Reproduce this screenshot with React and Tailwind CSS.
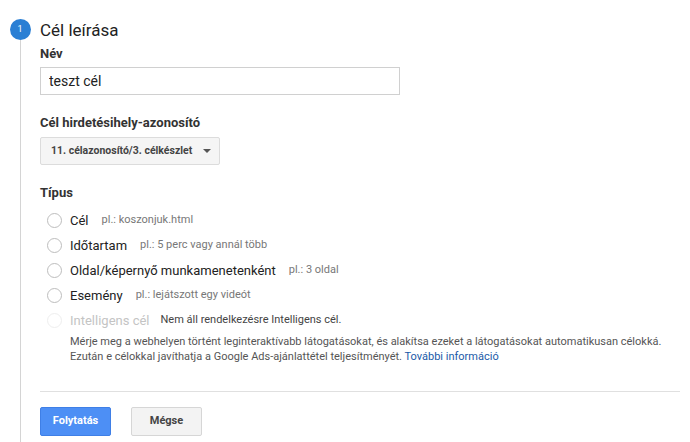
import React, { useState } from 'react';

const types = [
  { label: 'Cél', hint: 'pl.: koszonjuk.html' },
  { label: 'Időtartam', hint: 'pl.: 5 perc vagy annál több' },
  { label: 'Oldal/képernyő munkamenetenként', hint: 'pl.: 3 oldal' },
  { label: 'Esemény', hint: 'pl.: lejátszott egy videót' },
];

export default function App() {
  const [name, setName] = useState('teszt cél');
  const [type, setType] = useState(null);

  return (
    <div className="flex w-[690px] h-[442px] bg-white overflow-hidden text-[#222]" style={{ fontFamily: 'Roboto, "Liberation Sans", Arial, sans-serif' }}>
      {/* step rail */}
      <div className="flex flex-col items-center w-[40px] pt-[19px] shrink-0">
        <div className="w-[21px] h-[21px] rounded-full bg-[#2a7fd4] text-white text-[9px] flex items-center justify-center">1</div>
        <div className="flex-1 w-px bg-[#d4d4d4]" />
      </div>

      <div className="flex-1 pt-[18px] pr-[10px]">
        <h2 className="text-[17px] leading-[24px] text-[#222]">Cél leírása</h2>

        <label className="block mt-[4px] text-[13px] leading-[16px] font-bold text-[#333]">Név</label>
        <input
          value={name}
          onChange={(e) => setName(e.target.value)}
          className="mt-[5px] w-[360px] h-[28px] border border-[#d0d0d0] px-[8px] text-[14px] text-[#222] outline-none"
        />

        <label className="block mt-[20px] text-[13px] leading-[16px] font-bold text-[#333]">Cél hirdetésihely-azonosító</label>
        <button className="mt-[6px] w-[180px] h-[28px] flex items-center justify-between bg-[#f5f5f5] border border-[#dcdcdc] rounded-[2px] pl-[10px] pr-[8px] text-[10.5px] font-bold text-[#444]">
          <span>11. célazonosító/3. célkészlet</span>
          <span className="w-0 h-0 border-l-[4px] border-r-[4px] border-t-[4px] border-l-transparent border-r-transparent border-t-[#555]" />
        </button>

        <label className="block mt-[20px] text-[13px] leading-[16px] font-bold text-[#333]">Típus</label>
        <div className="mt-[7px] pl-[7px]">
          {types.map((t, i) => (
            <div key={t.label} className="flex items-center h-[25px] cursor-pointer" onClick={() => setType(i)}>
              <span className={`w-[15px] h-[15px] rounded-full border ${type === i ? 'border-[#2a7fd4]' : 'border-[#bdbdbd]'} flex items-center justify-center`}>
                {type === i && <span className="w-[7px] h-[7px] rounded-full bg-[#2a7fd4]" />}
              </span>
              <span className="ml-[8px] text-[13px] text-[#222]">{t.label}</span>
              <span className="ml-[13px] text-[11px] text-[#777]">{t.hint}</span>
            </div>
          ))}
          <div className="flex items-center h-[25px]">
            <span className="w-[15px] h-[15px] rounded-full border border-[#eeeeee]" />
            <span className="ml-[8px] text-[13px] text-[#c4c4c4]">Intelligens cél</span>
            <span className="ml-[11px] text-[11px] text-[#444]">Nem áll rendelkezésre Intelligens cél.</span>
          </div>
          <p className="pl-[23px] text-[11px] leading-[15px] text-[#555] mt-[1px]">
            Mérje meg a webhelyen történt leginteraktívabb látogatásokat, és alakítsa ezeket a látogatásokat automatikusan célokká.<br />
            Ezután e célokkal javíthatja a Google Ads-ajánlattétel teljesítményét. <a className="text-[#1a5aa8]" href="#">További információ</a>
          </p>
        </div>

        <div className="mt-[27px] h-px bg-[#e0e0e0]" />

        <div className="mt-[15px] flex gap-[20px]">
          <button className="w-[71px] h-[29px] bg-[#4d8ff5] border border-[#3f7fe6] rounded-[2px] text-white text-[11px] font-bold">Folytatás</button>
          <button className="w-[71px] h-[29px] bg-[#f3f3f3] border border-[#d6d6d6] rounded-[2px] text-[#444] text-[11px] font-bold">Mégse</button>
        </div>
      </div>
    </div>
  );
}
